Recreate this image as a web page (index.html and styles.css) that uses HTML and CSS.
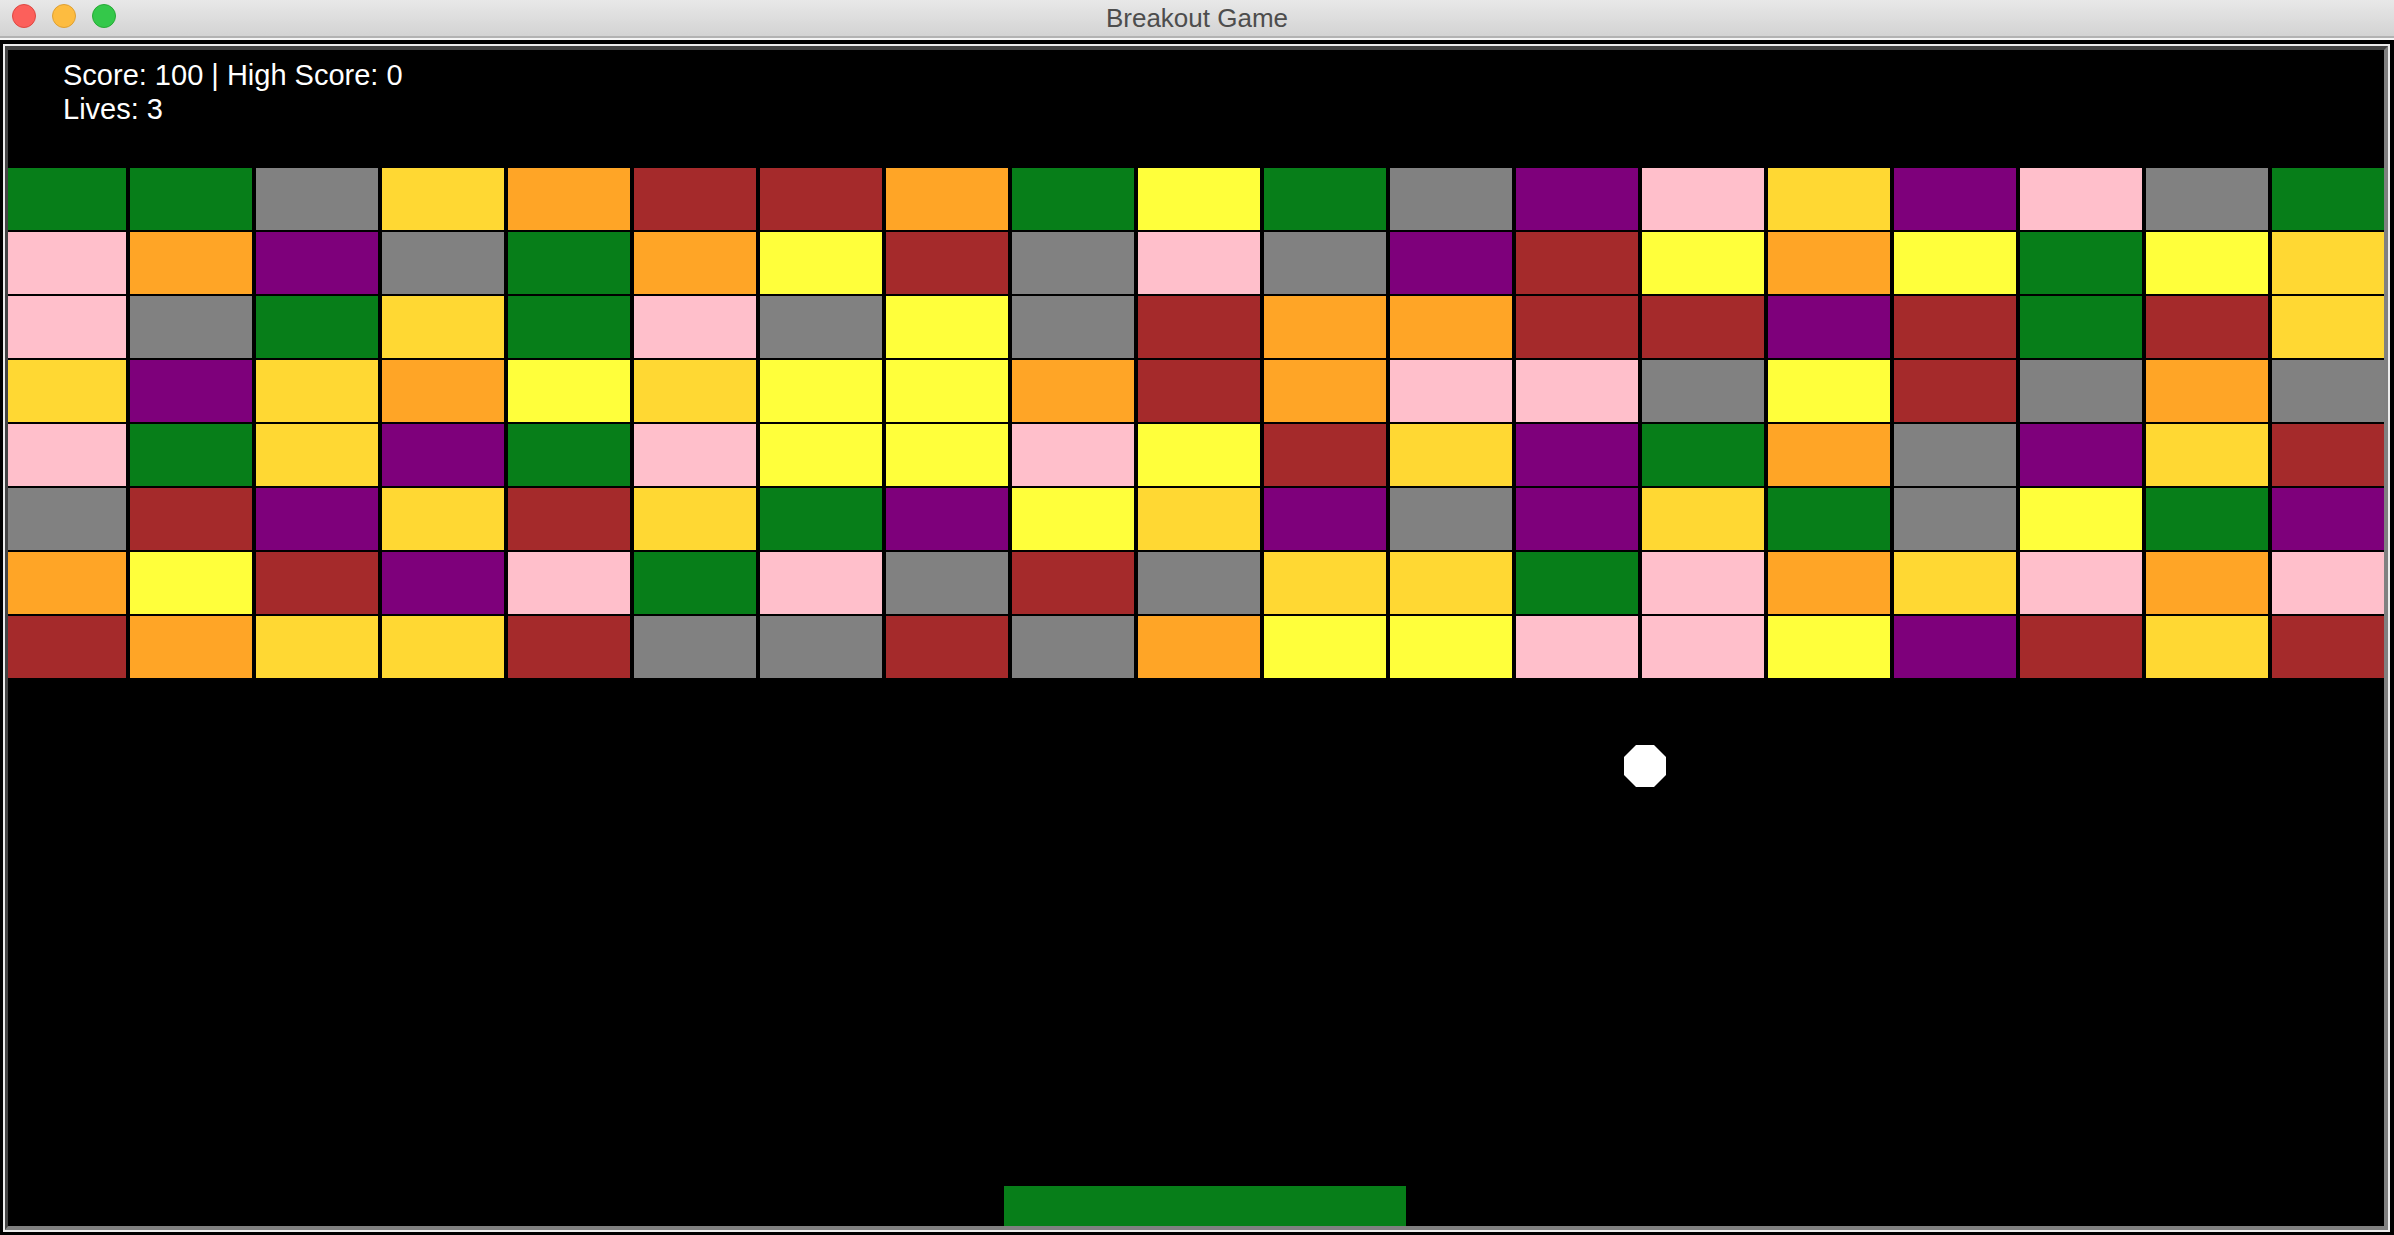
FILE: index.html
```html
<!DOCTYPE html>
<html>
<head>
<meta charset="utf-8">
<title>Breakout Game</title>
<link rel="stylesheet" href="styles.css">
</head>
<body>
<div class="window">
  <div class="titlebar">
    <div class="lights">
      <span class="light red"></span>
      <span class="light yellow"></span>
      <span class="light green"></span>
    </div>
    <div class="title">Breakout Game</div>
  </div>
  <div class="sep"></div>
  <div class="outer">
    <div class="frame">
      <div class="canvas">
        <div class="hud">
          <div>Score: 100 | High Score: 0</div>
          <div>Lives: 3</div>
        </div>
        <div class="bricks">
          <div class="b gn"></div><div class="b gn"></div><div class="b gy"></div><div class="b gd"></div><div class="b or"></div><div class="b br"></div><div class="b br"></div><div class="b or"></div><div class="b gn"></div><div class="b ye"></div><div class="b gn"></div><div class="b gy"></div><div class="b pu"></div><div class="b pk"></div><div class="b gd"></div><div class="b pu"></div><div class="b pk"></div><div class="b gy"></div><div class="b gn"></div>
          <div class="b pk"></div><div class="b or"></div><div class="b pu"></div><div class="b gy"></div><div class="b gn"></div><div class="b or"></div><div class="b ye"></div><div class="b br"></div><div class="b gy"></div><div class="b pk"></div><div class="b gy"></div><div class="b pu"></div><div class="b br"></div><div class="b ye"></div><div class="b or"></div><div class="b ye"></div><div class="b gn"></div><div class="b ye"></div><div class="b gd"></div>
          <div class="b pk"></div><div class="b gy"></div><div class="b gn"></div><div class="b gd"></div><div class="b gn"></div><div class="b pk"></div><div class="b gy"></div><div class="b ye"></div><div class="b gy"></div><div class="b br"></div><div class="b or"></div><div class="b or"></div><div class="b br"></div><div class="b br"></div><div class="b pu"></div><div class="b br"></div><div class="b gn"></div><div class="b br"></div><div class="b gd"></div>
          <div class="b gd"></div><div class="b pu"></div><div class="b gd"></div><div class="b or"></div><div class="b ye"></div><div class="b gd"></div><div class="b ye"></div><div class="b ye"></div><div class="b or"></div><div class="b br"></div><div class="b or"></div><div class="b pk"></div><div class="b pk"></div><div class="b gy"></div><div class="b ye"></div><div class="b br"></div><div class="b gy"></div><div class="b or"></div><div class="b gy"></div>
          <div class="b pk"></div><div class="b gn"></div><div class="b gd"></div><div class="b pu"></div><div class="b gn"></div><div class="b pk"></div><div class="b ye"></div><div class="b ye"></div><div class="b pk"></div><div class="b ye"></div><div class="b br"></div><div class="b gd"></div><div class="b pu"></div><div class="b gn"></div><div class="b or"></div><div class="b gy"></div><div class="b pu"></div><div class="b gd"></div><div class="b br"></div>
          <div class="b gy"></div><div class="b br"></div><div class="b pu"></div><div class="b gd"></div><div class="b br"></div><div class="b gd"></div><div class="b gn"></div><div class="b pu"></div><div class="b ye"></div><div class="b gd"></div><div class="b pu"></div><div class="b gy"></div><div class="b pu"></div><div class="b gd"></div><div class="b gn"></div><div class="b gy"></div><div class="b ye"></div><div class="b gn"></div><div class="b pu"></div>
          <div class="b or"></div><div class="b ye"></div><div class="b br"></div><div class="b pu"></div><div class="b pk"></div><div class="b gn"></div><div class="b pk"></div><div class="b gy"></div><div class="b br"></div><div class="b gy"></div><div class="b gd"></div><div class="b gd"></div><div class="b gn"></div><div class="b pk"></div><div class="b or"></div><div class="b gd"></div><div class="b pk"></div><div class="b or"></div><div class="b pk"></div>
          <div class="b br"></div><div class="b or"></div><div class="b gd"></div><div class="b gd"></div><div class="b br"></div><div class="b gy"></div><div class="b gy"></div><div class="b br"></div><div class="b gy"></div><div class="b or"></div><div class="b ye"></div><div class="b ye"></div><div class="b pk"></div><div class="b pk"></div><div class="b ye"></div><div class="b pu"></div><div class="b br"></div><div class="b gd"></div><div class="b br"></div>
        </div>
        <div class="ball"></div>
        <div class="paddle"></div>
      </div>
    </div>
  </div>
</div>
</body>
</html>
```

FILE: styles.css
```css
html, body {
  margin: 0;
  padding: 0;
  background: #000;
}

.window {
  width: 2394px;
  height: 1235px;
  display: flex;
  flex-direction: column;
  overflow: hidden;
}

.titlebar {
  height: 36px;
  flex: none;
  position: relative;
  display: flex;
  align-items: center;
  justify-content: center;
  background: linear-gradient(#e8e8e8, #d3d3d3);
  border-bottom: 2px solid #b2b2b2;
}

.lights {
  position: absolute;
  left: 12px;
  top: 4px;
  display: flex;
  gap: 16px;
}

.light {
  width: 22px;
  height: 22px;
  border-radius: 50%;
  border: 1px solid transparent;
}

.light.red { background: #fc605b; border-color: #de4842; }
.light.yellow { background: #fdbc40; border-color: #dea033; }
.light.green { background: #34c84a; border-color: #27aa35; }

.title {
  font-family: "Liberation Sans", Arial, sans-serif;
  font-size: 26px;
  color: #4d4d4d;
  margin-top: 0;
}

.sep {
  height: 2px;
  flex: none;
  background: #f4f4f4;
}

.outer {
  flex: 1;
  min-height: 0;
  padding: 4px 4px 3px 3px;
  display: flex;
}

.frame {
  flex: 1;
  min-width: 0;
  border: 2px solid #ececec;
  display: flex;
}

.canvas {
  flex: 1;
  min-width: 0;
  position: relative;
  overflow: hidden;
  background: #000;
  border-top: 4px solid #444444;
  border-left: 3px solid #444444;
  border-right: 4px solid #808080;
  border-bottom: 4px solid #808080;
}

.hud {
  padding: 8px 0 0 55px;
  font-family: "Liberation Sans", Arial, sans-serif;
  font-size: 29px;
  line-height: 34px;
  color: #ffffff;
  height: 76px;
  box-sizing: border-box;
}

.bricks {
  margin-top: 42px;
  margin-left: -4px;
  width: 2390px;
  display: grid;
  grid-template-columns: repeat(19, 122px);
  grid-auto-rows: 62px;
  column-gap: 4px;
  row-gap: 2px;
}

.b.gn { background: #077e19; }
.b.gy { background: #818181; }
.b.gd { background: #ffd833; }
.b.or { background: #ffa526; }
.b.br { background: #a52a2b; }
.b.ye { background: #ffff3b; }
.b.pk { background: #ffbfcb; }
.b.pu { background: #7e007b; }

.ball {
  position: absolute;
  left: 1616px;
  top: 695px;
  width: 42px;
  height: 42px;
  background: #fff;
  clip-path: polygon(12px 0, 30px 0, 36px 6px, 42px 12px, 42px 30px, 36px 36px, 30px 42px, 12px 42px, 6px 36px, 0 30px, 0 12px, 6px 6px);
}

.paddle {
  position: absolute;
  left: 996px;
  top: 1136px;
  width: 402px;
  height: 40px;
  background: #077e19;
}
```
